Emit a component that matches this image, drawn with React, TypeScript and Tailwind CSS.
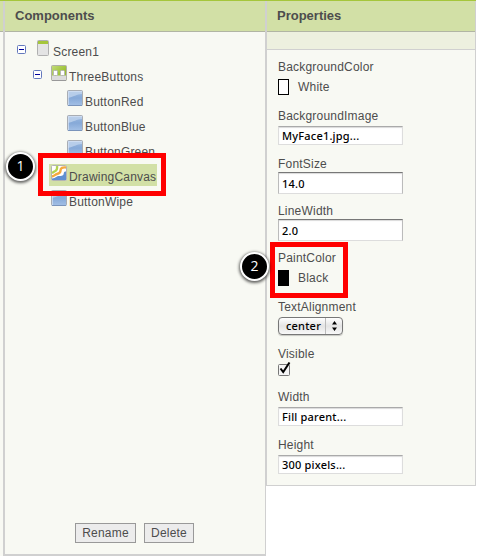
import type { ReactNode } from 'react';

const BlueButton = () => (
  <svg width="16" height="16" viewBox="0 0 16 16" className="shrink-0">
    <defs>
      <linearGradient id="blue" x1="0" y1="0" x2="0" y2="1">
        <stop offset="0" stopColor="#9dbbe0" />
        <stop offset=".5" stopColor="#86a9d8" />
        <stop offset="1" stopColor="#a3c0e6" />
      </linearGradient>
    </defs>
    <rect x=".5" y=".5" width="15" height="15" rx="1" fill="url(#blue)" stroke="#a9adb3" />
    <path d="M1 1H15V4C10 4 6 7 1 8Z" fill="#c3d6ee" opacity=".75" />
    <path d="M1.5 15V1.5H15" fill="none" stroke="#d5e2f3" opacity=".7" />
    <path d="M1 15.5H15" stroke="#6f8fbd" opacity=".8" />
  </svg>
);

const ScreenIcon = () => (
  <svg width="12" height="16" viewBox="0 0 12 16" className="shrink-0">
    <rect x=".5" y=".5" width="11" height="15" rx="1" fill="#e4e4e4" stroke="#b0b0b0" />
    <path d="M1 1H11V4H1Z" fill="#a5c63b" />
  </svg>
);

const ArrangementIcon = () => (
  <svg width="16" height="16" viewBox="0 0 16 16" className="shrink-0">
    <defs>
      <linearGradient id="leaf" x1="0" y1="0" x2="1" y2="1">
        <stop offset="0" stopColor="#c4dc7c" />
        <stop offset=".6" stopColor="#9cc234" />
        <stop offset="1" stopColor="#8db329" />
      </linearGradient>
    </defs>
    <rect x=".5" y=".5" width="15" height="15" rx="1" fill="url(#leaf)" stroke="#b0b0a8" />
    <path d="M1 10.5H15V15H1Z" fill="#dcdcdc" />
    <rect x="2.5" y="5.5" width="4" height="5" rx="1" fill="#fff" stroke="#b5b5b5" />
    <rect x="9.5" y="5.5" width="4" height="5" rx="1" fill="#fff" stroke="#b5b5b5" />
    <path d="M1 15.5H15" stroke="#999" />
  </svg>
);

const CanvasIcon = () => (
  <svg width="16" height="16" viewBox="0 0 16 16" className="shrink-0">
    <rect x=".5" y=".5" width="15" height="15" rx="1" fill="#fff" stroke="#b4b4b4" />
    <path d="M6 1C6.5 4 6 5.5 3.5 6.5C2.5 7 2 7.5 1 8" fill="none" stroke="#b2d44e" strokeWidth="2.4" />
    <path d="M15 2.5C11.5 2 9.5 3 9.5 5.5C9.5 8 8 8.5 6 9C4 9.5 3.5 11 1 11.5" fill="none" stroke="#f4a93f" strokeWidth="2.4" />
    <path d="M15 6.5C12.5 6.5 13 8 12.5 9.5C12 11 10 11 8 11C5.500 11 5 13 1 13.500V15H15Z" fill="#5f8fd2" />
  </svg>
);

const Collapse = () => (
  <svg width="9" height="9" viewBox="0 0 9 9" className="shrink-0">
    <rect x=".5" y=".5" width="8" height="8" rx="1" fill="#fff" stroke="#6479bd" />
    <path d="M2 4.5H7" stroke="#00009c" />
  </svg>
);

const Callout = ({ n, place }: { n: string; place: string }) => (
  <div className={`absolute z-20 flex size-[29px] justify-center rounded-full border-2 border-white bg-black font-['Open_Sans',sans-serif] text-[14px] leading-[23px] text-white shadow-[0_1px_3px_1px_rgba(0,0,0,0.6)] ${place}`}>
    {n}
  </div>
);

const TreeRow = ({ indent, children }: { indent: string; children: ReactNode }) => (
  <div className={`flex h-[25px] items-start ${indent}`}>{children}</div>
);

const Name = ({ children }: { children: ReactNode }) => (
  <span className="ml-[2px] pt-[5px] leading-[14px]">{children}</span>
);

const Label = ({ children }: { children: ReactNode }) => <div className="h-[14px] leading-[14px]">{children}</div>;

const Field = ({ value, tall }: { value: string; tall?: boolean }) => (
  <div
    className={`w-[125px] border border-[#ddd] bg-white pl-[3px] font-['Noto_Sans',sans-serif] text-[11px] font-medium tracking-[0.2px] text-black shadow-[inset_0_1px_1px_rgba(0,0,0,0.15)] ${tall ? 'h-[22px] border-x-[#bbb] border-t-[#777] leading-[22px]' : 'h-[19px] border-t-[#aaa] leading-[18px]'}`}
  >
    {value}
  </div>
);

const Swatch = ({ name, fill }: { name: string; fill: string }) => (
  <div className="flex h-4 items-center">
    <span className={`h-4 w-[11px] border border-black ${fill}`} />
    <span className="ml-[9px] leading-[14px]">{name}</span>
  </div>
);

const header = 'h-[31px] border-b border-b-[#b1b5a4] bg-[#d2e0a6] text-[13px] font-bold tracking-normal leading-[30px]';

export default function App() {
  return (
    <div className="relative h-[556px] w-[479px] overflow-hidden bg-white font-['Liberation_Sans',sans-serif] text-[12px] tracking-[0.2px] text-[#4d4d4d]">
      <div className="h-px w-[476px] bg-[#a5c63b]" />
      <div className="flex items-start">
        <div className="h-[555px] w-[3px] bg-[#f8f9f3]">
          <div className={header} />
        </div>
        <section className="flex h-[555px] w-[263px] flex-col border-r border-b-2 border-l-2 border-[#d0d0d0] bg-[#f8f9f3]">
          <h2 className={`${header} pl-[10px]`}>Components</h2>
          <div className="pt-2">
            <TreeRow indent="pl-3">
              <div className="pt-[5px]"><Collapse /></div>
              <div className="ml-[11px]"><ScreenIcon /></div>
              <span className="ml-1 pt-[5px] leading-[14px]">Screen1</span>
            </TreeRow>
            <TreeRow indent="pl-7">
              <div className="pt-[5px]"><Collapse /></div>
              <div className="ml-[9px]"><ArrangementIcon /></div>
              <Name>ThreeButtons</Name>
            </TreeRow>
            <TreeRow indent="pl-[62px]"><BlueButton /><Name>ButtonRed</Name></TreeRow>
            <TreeRow indent="pl-[62px]"><BlueButton /><Name>ButtonBlue</Name></TreeRow>
            <TreeRow indent="pl-[62px]"><BlueButton /><Name>ButtonGreen</Name></TreeRow>
            <TreeRow indent="pl-[44px]">
              <div className="-mt-px flex h-[22px] w-[108px] bg-[#d2e0a6] pt-px pl-[2px]"><CanvasIcon /><Name>DrawingCanvas</Name></div>
            </TreeRow>
            <TreeRow indent="pl-[46px]"><BlueButton /><Name>ButtonWipe</Name></TreeRow>
          </div>
          <div className="mt-auto mb-[11px] flex gap-2 pl-[70px]">
            <button className="h-5 w-[61px] border border-[#999] bg-[#ececec] leading-[18px]">Rename</button>
            <button className="h-5 w-[50px] border border-[#999] bg-[#ececec] leading-[18px]">Delete</button>
          </div>
        </section>
        <section className="h-[485px] w-[210px] border-r border-b border-l border-[#d0d0d0] bg-[#f8f9f3]">
          <h2 className={`${header} pl-[10px]`}>Properties</h2>
          <div className="h-[18px] border-b border-[#d0d0d0] bg-[#edf0df]" />
          <div className="pt-[10px] pl-[11px]">
            <div className="h-[49px]"><Label>BackgroundColor</Label><div className="pt-[5px]"><Swatch name="White" fill="bg-white" /></div></div>
            <div className="h-[48px]"><Label>BackgroundImage</Label><div className="pt-[3px]"><Field value="MyFace1.jpg..." /></div></div>
            <div className="h-[47px]"><Label>FontSize</Label><div className="pt-px"><Field value="14.0" tall /></div></div>
            <div className="h-[47px]"><Label>LineWidth</Label><div className="pt-px"><Field value="2.0" tall /></div></div>
            <div className="h-[49px]"><Label>PaintColor</Label><div className="pt-[5px]"><Swatch name="Black" fill="bg-black" /></div></div>
            <div className="h-[47px]">
              <Label>TextAlignment</Label>
              <div className="mt-[3px] flex h-[18px] w-[65px] items-center rounded border border-[#777] bg-gradient-to-b from-white via-[#e4e4e4] to-[#f8f8f8] font-['Noto_Sans',sans-serif] text-[11px] font-medium tracking-[0.2px] text-black shadow-[0_1px_1px_rgba(0,0,0,0.2)]">
                <span className="w-[46px] pl-[7px]">center</span>
                <span className="flex h-full w-[17px] items-center justify-center border-l border-[#bbb]">
                  <svg width="5" height="10" viewBox="0 0 5 10"><path d="M0 3.5L2.5 0L5 3.5ZM0 6.5H5L2.5 10Z" /></svg>
                </span>
              </div>
            </div>
            <div className="h-[43px]">
              <Label>Visible</Label>
              <svg className="mt-px" width="14" height="15" viewBox="0 0 14 15">
                <rect x=".5" y="2.5" width="11" height="11" rx="1" fill="#f5f5f5" stroke="#777" />
                <path d="M2.5 6.5L5.200 10L11.500 .5" fill="none" stroke="#000" strokeWidth="2" />
              </svg>
            </div>
            <div className="h-[48px]"><Label>Width</Label><div className="pt-[3px]"><Field value="Fill parent..." /></div></div>
            <div><Label>Height</Label><div className="pt-[3px]"><Field value="300 pixels..." /></div></div>
          </div>
        </section>
      </div>
      <div className="absolute top-[153px] left-[38px] z-10 h-[43px] w-[128px] border-[5px] border-[#f00]" />
      <div className="absolute top-[242px] left-[270px] z-10 h-[56px] w-[78px] border-[5px] border-[#f00]" />
      <Callout n="1" place="top-[152px] left-[6px]" />
      <Callout n="2" place="top-[252px] left-[240px]" />
    </div>
  );
}
